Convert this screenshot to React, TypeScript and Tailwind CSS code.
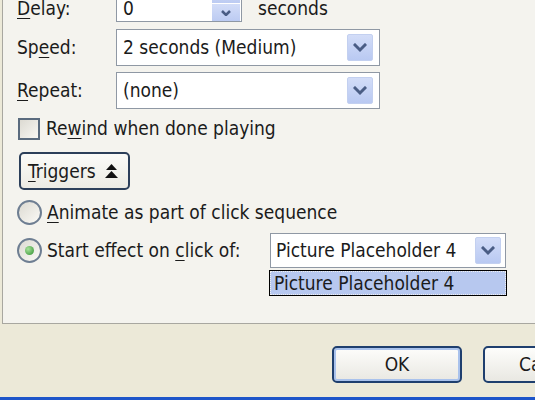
import React from "react";

const font = { fontFamily: '"DejaVu Sans Condensed", "DejaVu Sans", Tahoma, sans-serif' };

function Chevron() {
  return (
    <svg width="14" height="10" viewBox="0 0 14 10">
      <path d="M2 2 L7 7 L12 2" fill="none" stroke="#4a5d85" strokeWidth="3" strokeLinecap="square" />
    </svg>
  );
}

function DropBtn() {
  return (
    <div className="w-[26px] h-[27px] rounded-[2px] bg-gradient-to-b from-[#d3ddf8] to-[#b9c9f2] border border-[#c3d0f0] flex items-center justify-center">
      <Chevron />
    </div>
  );
}

function U({ children }: { children: React.ReactNode }) {
  return <span className="underline underline-offset-[3px] decoration-1">{children}</span>;
}

export default function App() {
  return (
    <div
      className="w-[535px] h-[400px] bg-[#ece9d8] overflow-hidden flex flex-col text-[19px] text-[#1b1b1b] leading-none"
      style={font}
    >
      {/* inner panel */}
      <div className="ml-[2px] -mt-[16px] w-[560px] h-[340px] shrink-0 border border-[#a8a7a0] bg-[#f4f3ee] pl-[14px] flex flex-col">
        {/* Delay */}
        <div className="flex items-center h-[37px]">
          <div className="w-[99px] mt-[9px]">
            <U>D</U>elay:
          </div>
          <div className="w-[126px] h-[37px] border border-[#8f98a4] bg-white flex items-center">
            <span className="ml-[6px] flex-1 mt-[9px]">0</span>
            <div className="flex flex-col gap-[1px] mr-[1px]">
              <div className="w-[28px] h-[17px] bg-gradient-to-b from-[#d3ddf8] to-[#bccbf2] flex items-center justify-center">
                <svg width="10" height="6" viewBox="0 0 10 6"><path d="M1 5 L5 1 L9 5" fill="none" stroke="#4a5d85" strokeWidth="2.5" /></svg>
              </div>
              <div className="w-[28px] h-[17px] bg-gradient-to-b from-[#d3ddf8] to-[#bccbf2] flex items-center justify-center">
                <svg width="10" height="6" viewBox="0 0 10 6"><path d="M1 1 L5 5 L9 1" fill="none" stroke="#4a5d85" strokeWidth="2.5" /></svg>
              </div>
            </div>
          </div>
          <span className="ml-[16px] mt-[9px]">seconds</span>
        </div>

        {/* Speed */}
        <div className="flex items-center h-[37px] mt-[7px]">
          <div className="w-[99px]">
            Sp<U>e</U>ed:
          </div>
          <div className="w-[264px] h-[37px] border border-[#8f98a4] bg-white flex items-center">
            <span className="ml-[6px] flex-1">2 seconds (Medium)</span>
            <div className="mr-[6px]"><DropBtn /></div>
          </div>
        </div>

        {/* Repeat */}
        <div className="flex items-center h-[37px] mt-[6px]">
          <div className="w-[99px]">
            <U>R</U>epeat:
          </div>
          <div className="w-[264px] h-[37px] border border-[#8f98a4] bg-white flex items-center">
            <span className="ml-[6px] flex-1">(none)</span>
            <div className="mr-[6px]"><DropBtn /></div>
          </div>
        </div>

        {/* Rewind */}
        <div className="flex items-center h-[23px] mt-[8px]">
          <div className="ml-[1px] w-[22px] h-[22px] border-2 border-[#5a6b7e] bg-gradient-to-br from-[#dcdad2] to-[#f8f7f3]" />
          <span className="ml-[6px]">
            Re<U>w</U>ind when done playing
          </span>
        </div>

        {/* Triggers */}
        <div className="mt-[12px] flex">
          <div className="ml-[2px] w-[111px] h-[38px] rounded-[5px] border-2 border-[#2c3f5a] bg-gradient-to-b from-[#fbfbf8] to-[#ecebe4] flex items-center pl-[7px]">
            <span>
              <U>T</U>riggers
            </span>
            <svg className="ml-[8px]" width="15" height="16" viewBox="0 0 15 16">
              <path d="M7.5 1 L13 7 L2 7 Z" fill="#111" />
              <path d="M7.5 8 L14 15 L1 15 Z" fill="#111" />
            </svg>
          </div>
        </div>

        {/* Radio 1 */}
        <div className="flex items-center h-[25px] mt-[10px]">
          <div className="w-[25px] h-[25px] rounded-full border-2 border-[#6e7e92] bg-gradient-to-br from-[#dcdad2] to-[#fbfaf6]" />
          <span className="ml-[5px]">
            <U>A</U>nimate as part of click sequence
          </span>
        </div>

        {/* Radio 2 */}
        <div className="flex items-center h-[35px] mt-[8px]">
          <div className="w-[25px] h-[25px] rounded-full border-2 border-[#6e7e92] bg-gradient-to-br from-[#dcdad2] to-[#fbfaf6] flex items-center justify-center">
            <div className="w-[9px] h-[9px] rounded-full bg-[radial-gradient(circle_at_35%_35%,#a8e29a,#2f8f2f)]" />
          </div>
          <span className="ml-[5px] w-[223px]">
            Start effect on <U>c</U>lick of:
          </span>
          <div className="relative w-[236px] h-[35px] border border-[#8f98a4] bg-white flex items-center">
            <span className="ml-[5px] flex-1">Picture Placeholder 4</span>
            <div className="mr-[4px]"><DropBtn /></div>
            <div className="absolute left-[-2px] top-[36px] w-[238px] h-[26px] bg-black p-[1px]">
              <div className="w-full h-full bg-[#b7c8ef] border border-dotted border-[#f0f0f0] flex items-center pl-[3px]">
                Picture Placeholder 4
              </div>
            </div>
          </div>
        </div>
      </div>

      {/* buttons */}
      <div className="flex mt-[22px] ml-[332px] gap-[21px] shrink-0">
        <div className="w-[130px] h-[37px] shrink-0 rounded-[5px] border-2 border-[#1f3f6e] bg-gradient-to-b from-[#fdfdfb] to-[#e9e8e2] shadow-[inset_0_0_0_2px_#a9c2ec] flex items-center justify-center">
          OK
        </div>
        <div className="w-[130px] h-[37px] shrink-0 rounded-[5px] border-2 border-[#1f3f6e] bg-gradient-to-b from-[#fdfdfb] to-[#e9e8e2] flex items-center justify-center">
          Cancel
        </div>
      </div>
      <div className="flex-1" />
      <div className="h-[3px] bg-[#1d55c9] shrink-0" />
    </div>
  );
}
